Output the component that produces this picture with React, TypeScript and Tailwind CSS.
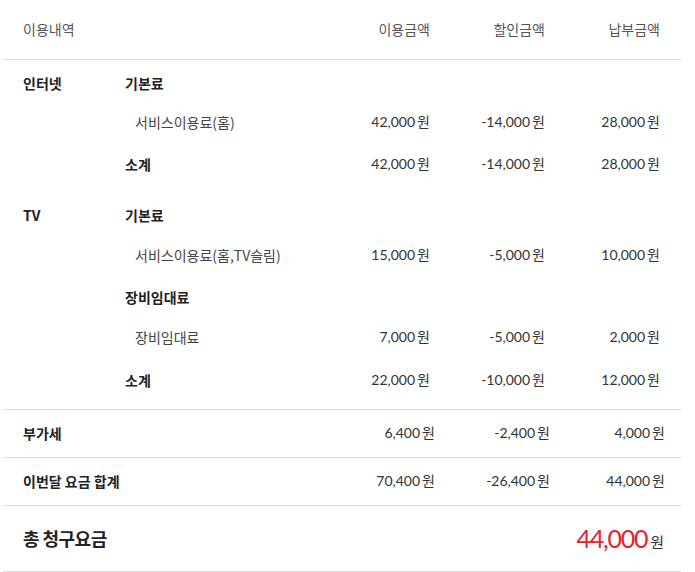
import React from 'react';

interface Item {
    name: string;
    use: string;
    discount: string;
    pay: string;
}

interface Group {
    title: string;
    items: Item[];
}

interface Section {
    label: string;
    groups: Group[];
    subtotal: [string, string, string];
}

const sections: Section[] = [
    {
        label: '인터넷',
        groups: [
            {
                title: '기본료',
                items: [{ name: '서비스이용료(홈)', use: '42,000', discount: '-14,000', pay: '28,000' }],
            },
        ],
        subtotal: ['42,000', '-14,000', '28,000'],
    },
    {
        label: 'TV',
        groups: [
            {
                title: '기본료',
                items: [{ name: '서비스이용료(홈,TV슬림)', use: '15,000', discount: '-5,000', pay: '10,000' }],
            },
            {
                title: '장비임대료',
                items: [{ name: '장비임대료', use: '7,000', discount: '-5,000', pay: '2,000' }],
            },
        ],
        subtotal: ['22,000', '-10,000', '12,000'],
    },
];

function Won({ value }: { value: string }) {
    return (
        <div className="flex items-baseline justify-end">
            <span className="font-['Lato',sans-serif] text-[14px] text-[#333]">{value}</span>
            <span className="ml-[2px] text-[14px] text-[#333]">원</span>
        </div>
    );
}

export default function App() {
    return (
        <div className="min-h-screen bg-white font-['Noto_Sans_CJK_KR','Noto_Sans',sans-serif]">
            <div className="ml-[3px] w-[678px]">
                {/* Header */}
                <div className="grid h-[60px] grid-cols-[102px_190px_115px_115px_115px] items-center border-b border-[#ddd] pl-5 pr-[21px] text-[14px] text-[#555]">
                    <div>이용내역</div>
                    <div />
                    <div className="text-right">이용금액</div>
                    <div className="text-right">할인금액</div>
                    <div className="text-right">납부금액</div>
                </div>

                {/* Sections */}
                <div className="pb-[20px]">
                    {sections.map((section, si) => (
                        <div
                            key={section.label}
                            className={`grid grid-cols-[102px_190px_115px_115px_115px] pl-5 pr-[21px] ${si === 0 ? 'mt-[13px]' : 'mt-[32px]'}`}
                        >
                            <div className="row-span-6 text-[14px] leading-5 font-bold text-[#222]">{section.label}</div>
                            {section.groups.map((group, gi) => (
                                <React.Fragment key={group.title}>
                                    <div className={`col-span-4 text-[14px] leading-5 font-bold text-[#222] ${gi > 0 ? 'mt-[23px]' : ''}`}>
                                        {group.title}
                                    </div>
                                    {group.items.map((item) => (
                                        <div
                                            key={item.name}
                                            className={`col-span-4 grid h-5 grid-cols-[190px_115px_115px_115px] items-center leading-5 ${si === 0 ? 'mt-[18px]' : 'mt-[19px]'}`}
                                        >
                                            <div className="pl-[10px] text-[14px] text-[#444]">{item.name}</div>
                                            <Won value={item.use} />
                                            <Won value={item.discount} />
                                            <Won value={item.pay} />
                                        </div>
                                    ))}
                                </React.Fragment>
                            ))}
                            <div
                                className={`col-span-4 grid h-5 grid-cols-[190px_115px_115px_115px] items-center leading-5 ${si === 0 ? 'mt-[22px]' : 'mt-[23px]'}`}
                            >
                                <div className="text-[14px] font-bold text-[#222]">소계</div>
                                <Won value={section.subtotal[0]} />
                                <Won value={section.subtotal[1]} />
                                <Won value={section.subtotal[2]} />
                            </div>
                        </div>
                    ))}
                </div>

                {/* Summary rows */}
                <div className="grid h-[48px] grid-cols-[297px_115px_115px_115px] items-center border-t border-[#ddd] pb-[2px] pl-5 pr-[16px] leading-5">
                    <div className="text-[14px] font-bold text-[#222]">부가세</div>
                    <Won value="6,400" />
                    <Won value="-2,400" />
                    <Won value="4,000" />
                </div>
                <div className="grid h-[48px] grid-cols-[297px_115px_115px_115px] items-center border-t border-[#ddd] pb-[2px] pl-5 pr-[16px] leading-5">
                    <div className="text-[14px] font-bold text-[#222]">이번달 요금 합계</div>
                    <Won value="70,400" />
                    <Won value="-26,400" />
                    <Won value="44,000" />
                </div>

                {/* Total */}
                <div className="flex h-[67px] items-center justify-between border-y border-[#ddd] pl-5 pr-[17px]">
                    <div className="text-[18px] font-bold tracking-[-0.03em] text-[#222]">총 청구요금</div>
                    <div className="flex items-baseline">
                        <span className="font-['Lato',sans-serif] text-[25px] tracking-[-0.05em] text-[#e5212b]">44,000</span>
                        <span className="ml-[3px] text-[15px] text-[#333]">원</span>
                    </div>
                </div>
            </div>
        </div>
    );
}
